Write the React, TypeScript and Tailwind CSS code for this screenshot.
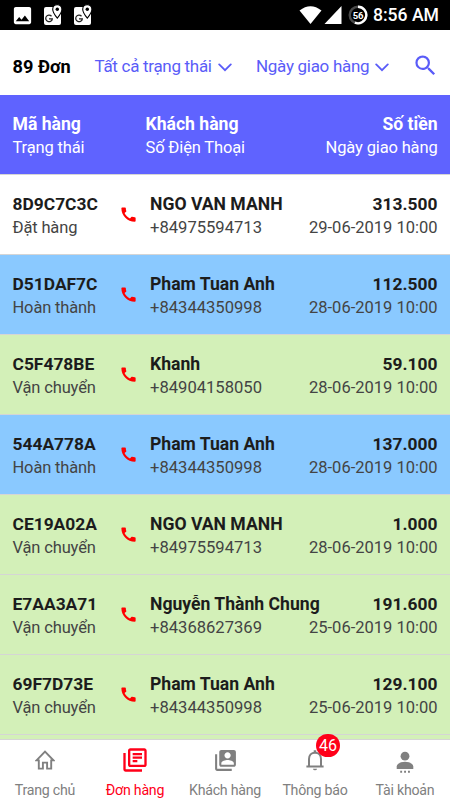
import { MdCall, MdImage, MdOutlineLibraryBooks, MdSearch } from "react-icons/md";

type Order = {
  code: string;
  status: string;
  customer: string;
  phone: string;
  amount: string;
  date: string;
};

const orders: Order[] = [
  { code: "8D9C7C3C", status: "Đặt hàng", customer: "NGO VAN MANH", phone: "+84975594713", amount: "313.500", date: "29-06-2019 10:00" },
  { code: "D51DAF7C", status: "Hoàn thành", customer: "Pham Tuan Anh", phone: "+84344350998", amount: "112.500", date: "28-06-2019 10:00" },
  { code: "C5F478BE", status: "Vận chuyển", customer: "Khanh", phone: "+84904158050", amount: "59.100", date: "28-06-2019 10:00" },
  { code: "544A778A", status: "Hoàn thành", customer: "Pham Tuan Anh", phone: "+84344350998", amount: "137.000", date: "28-06-2019 10:00" },
  { code: "CE19A02A", status: "Vận chuyển", customer: "NGO VAN MANH", phone: "+84975594713", amount: "1.000", date: "28-06-2019 10:00" },
  { code: "E7AA3A71", status: "Vận chuyển", customer: "Nguyễn Thành Chung", phone: "+84368627369", amount: "191.600", date: "25-06-2019 10:00" },
  { code: "69F7D73E", status: "Vận chuyển", customer: "Pham Tuan Anh", phone: "+84344350998", amount: "129.100", date: "25-06-2019 10:00" },
];

const rowColors: Record<string, string> = {
  "Đặt hàng": "bg-white",
  "Hoàn thành": "bg-[#8ac9ff]",
  "Vận chuyển": "bg-[#d3f0b8]",
};

function MapsIcon() {
  return (
    <svg width="20" height="22" viewBox="0 0 20 22">
      <rect x="1" y="3" width="17" height="18" rx="2" fill="#fff" />
      <path d="M8.500 12.200A3.300 3.300 0 1 0 9.300 14.800H6" fill="none" stroke="#222" strokeWidth="1.300" />
      <path d="M14.300.600a4.600 4.600 0 0 0-4.600 4.600c0 3.200 4.600 9 4.600 9s4.600-5.800 4.600-9A4.600 4.600 0 0 0 14.300.600Z" fill="#fff" stroke="#000" strokeWidth="1.100" />
      <circle cx="14.300" cy="5.200" r="1.700" fill="#000" />
    </svg>
  );
}

function SignalIcons() {
  return (
    <svg width="44" height="20" viewBox="0 0 44 20" fill="#fff">
      <path d="M.500 5.500Q11.500-3 22.500 5.500L11.500 19Z" />
      <path d="M42.500 1v18h-17Z" />
    </svg>
  );
}

function Battery() {
  return (
    <div className="relative flex h-5 w-5 items-center justify-center">
      <svg className="absolute inset-0" width="20" height="20" viewBox="0 0 20 20" fill="none" strokeWidth="2.400">
        <circle cx="10" cy="10" r="8.300" stroke="#4a4a4a" />
        <path d="M10 1.700A8.300 8.300 0 1 1 6.900 17.700" stroke="#fff" />
      </svg>
      <span className="relative text-[9.5px] font-bold tracking-tight text-white">56</span>
    </div>
  );
}

function Chevron() {
  return (
    <svg className="mt-0.5" width="14" height="9" viewBox="0 0 14 9" fill="none">
      <path d="M1.200 1.400 7 7.200l5.800-5.800" stroke="#5a5cf8" strokeWidth="1.800" strokeLinecap="round" />
    </svg>
  );
}

function HomeIcon() {
  return (
    <svg width="20" height="20" viewBox="0 0 20 20" fill="none" stroke="currentColor" strokeWidth="1.900">
      <path d="M1.500 10.400 10 1.600l8.500 8.800h-2.300v8.200h-4.100v-6H7.900v6H3.800v-8.200Z" />
    </svg>
  );
}

function ContactsIcon() {
  return (
    <svg width="25" height="25" viewBox="0 0 24 24" fill="currentColor">
      <path d="M4 6H2v14c0 1.100.900 2 2 2h14v-2H4V6Zm16-4H8c-1.100 0-2 .900-2 2v12c0 1.100.900 2 2 2h12c1.100 0 2-.900 2-2V4c0-1.100-.900-2-2-2Zm-6 2c1.660 0 3 1.340 3 3s-1.340 3-3 3-3-1.340-3-3 1.340-3 3-3Zm6 12H8v-1.500c0-1.990 4-3 6-3s6 1.010 6 3V16Z" />
    </svg>
  );
}

function BellIcon() {
  return (
    <svg width="24" height="24" viewBox="0 0 24 24">
      <path d="M6 18.600V11c0-3.600 2.300-6.300 6-6.300s6 2.700 6 6.300v7.600" fill="none" stroke="currentColor" strokeWidth="2" />
      <path d="M3.400 17.500h17.200v2.100H3.400ZM10.700 2.300h2.600v2.600h-2.600ZM10 20.700h4a2 1.500 0 0 1-4 0Z" fill="currentColor" />
    </svg>
  );
}

function AccountIcon() {
  return (
    <svg width="24" height="26" viewBox="0 0 24 26" fill="currentColor">
      <circle cx="12" cy="9.200" r="4.400" />
      <path d="M3.700 22v-2.500c0-2.900 4.300-4.800 8.300-4.800s8.300 1.900 8.300 4.800V22Z" />
      <path d="M7.200 23.800h1.900v1.900H7.200zM11.100 23.800H13v1.900h-1.900zM15 23.800h1.900v1.900H15z" />
    </svg>
  );
}

const tabs = [
  { label: "Trang chủ", icon: <HomeIcon /> },
  { label: "Đơn hàng", icon: <MdOutlineLibraryBooks size={28} />, active: true },
  { label: "Khách hàng", icon: <ContactsIcon /> },
  { label: "Thông báo", icon: <BellIcon />, badge: 46 },
  { label: "Tài khoản", icon: <AccountIcon /> },
];

function OrderRow({ order }: { order: Order }) {
  return (
    <div className={`flex h-20 shrink-0 items-center border-b border-[#d5d5d5] px-[12.5px] ${rowColors[order.status]}`}>
      <div className="w-[106px] shrink-0 pt-[3px]">
        <div className="text-[17.4px] font-bold text-[#1c1c1c]">{order.code}</div>
        <div className="text-[16.5px] tracking-[-0.15px] text-[#444]">{order.status}</div>
      </div>
      <MdCall size={19} className="mr-[12.5px] shrink-0 text-[#ff0000]" />
      <div className="w-0 flex-1 whitespace-nowrap pt-[3px]">
        <div className="text-[17.6px] font-bold text-[#1c1c1c]">{order.customer}</div>
        <div className="text-[16.6px] text-[#444]">{order.phone}</div>
      </div>
      <div className="whitespace-nowrap pt-[3px] text-right">
        <div className="text-[17.4px] font-bold text-[#1c1c1c]">{order.amount}</div>
        <div className="text-[16.5px] text-[#444]">{order.date}</div>
      </div>
    </div>
  );
}

export default function App() {
  return (
    <div className="flex h-[800px] w-[450px] flex-col overflow-hidden bg-white font-['Roboto',sans-serif] leading-[23px]">
      {/* status bar */}
      <div className="flex h-[30px] shrink-0 items-center bg-black pl-[11px] pr-[11px] text-white">
        <MdImage size={23} />
        <div className="ml-[9px] flex gap-[10px]">
          <MapsIcon />
          <MapsIcon />
        </div>
        <div className="ml-auto flex items-center">
          <SignalIcons />
          <div className="ml-[5px]"><Battery /></div>
          <span className="ml-[5px] pt-px text-[17.6px] font-medium">8:56 AM</span>
        </div>
      </div>

      {/* filters */}
      <div className="flex h-[65px] shrink-0 items-center pl-[12.5px] pr-[11.5px] pt-2 text-[17px] tracking-[-0.3px] text-[#5a5cf8]">
        <span className="w-[82px] text-[18.2px] font-bold tracking-normal text-black">89 Đơn</span>
        <div className="flex w-[161.5px] items-center gap-1.5">Tất cả trạng thái <Chevron /></div>
        <div className="flex items-center gap-1.5">Ngày giao hàng <Chevron /></div>
        <MdSearch size={27} className="mb-[3px] ml-auto" />
      </div>

      {/* table head */}
      <div className="flex h-20 shrink-0 items-center border-b border-[#d5d5d5] bg-[#5f63ff] px-[12.5px] pt-[3px] text-white">
        <div className="w-[133px]">
          <div className="text-[17.6px] font-bold">Mã hàng</div>
          <div className="text-[16.5px] tracking-[-0.15px]">Trạng thái</div>
        </div>
        <div className="flex-1">
          <div className="text-[17.6px] font-bold">Khách hàng</div>
          <div className="text-[16.5px] tracking-[-0.15px]">Số Điện Thoại</div>
        </div>
        <div className="text-right">
          <div className="text-[17.6px] font-bold">Số tiền</div>
          <div className="text-[16.5px] tracking-[-0.15px]">Ngày giao hàng</div>
        </div>
      </div>

      {/* orders */}
      <div className="flex min-h-0 flex-1 flex-col overflow-hidden bg-[#d3f0b8]">
        {orders.map((order) => (
          <OrderRow key={order.code} order={order} />
        ))}
      </div>

      {/* bottom tabs */}
      <div className="flex h-[61px] shrink-0 border-t border-[#d5d5d5] bg-white">
        {tabs.map((tab) => (
          <div key={tab.label} className={`flex flex-1 flex-col items-center ${tab.active ? "text-[#ff0019]" : "text-[#808080]"}`}>
            <div className="relative flex h-10 items-center">
              {tab.icon}
              {tab.badge && (
                <span className="absolute -top-[6px] left-[13px] flex h-[23px] w-6 items-center justify-center rounded-full bg-[#ff0019] text-base text-white">
                  {tab.badge}
                </span>
              )}
            </div>
            <span className="whitespace-nowrap text-[14.2px] leading-5 tracking-[-0.25px]">{tab.label}</span>
          </div>
        ))}
      </div>
    </div>
  );
}
